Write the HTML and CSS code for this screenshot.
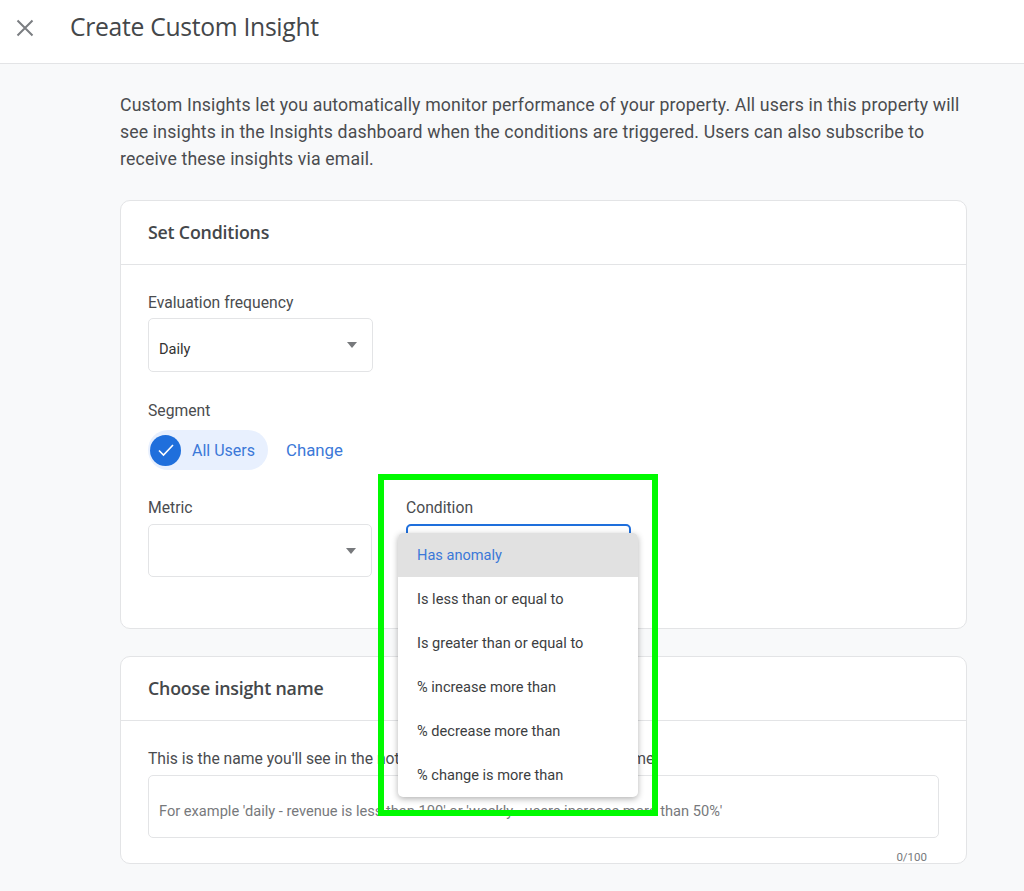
FILE: index.html
```html
<!DOCTYPE html>
<html lang="en">

<head>
    <meta charset="UTF-8">
    <meta name="viewport" content="width=device-width, initial-scale=1.0">
    <title>Create Custom Insight</title>
    <link rel="stylesheet" href="styles.css">
</head>

<body>

    <header class="top-bar">
        <svg class="close-icon" width="18" height="18" viewBox="0 0 18 18">
            <path d="M1.5 1.5L16.5 16.5M16.5 1.5L1.5 16.5" />
        </svg>
        <h1 class="page-title">Create Custom Insight</h1>
    </header>

    <main class="content">
        <p class="intro">Custom Insights let you automatically monitor performance of your property. All users in this property will see insights in the Insights dashboard when the conditions are triggered. Users can also subscribe to receive these insights via email.</p>

        <section class="card card-conditions">
            <h2 class="card-title">Set Conditions</h2>
            <div class="card-body">
                <label class="field-label">Evaluation frequency</label>
                <div class="select">
                    <span class="select-value">Daily</span>
                    <span class="caret"></span>
                </div>

                <label class="field-label segment-label">Segment</label>
                <div class="segment-row">
                    <div class="chip">
                        <span class="chip-check">
                            <svg width="18" height="18" viewBox="0 0 18 18">
                                <path d="M2 9.5L6.5 14L16 4" />
                            </svg>
                        </span>
                        <span>All Users</span>
                    </div>
                    <a class="change-link" href="#">Change</a>
                </div>

                <div class="metric-row">
                    <div class="metric-col">
                        <label class="field-label">Metric</label>
                        <div class="select select-metric">
                            <span class="caret"></span>
                        </div>
                    </div>
                    <div class="condition-col">
                        <label class="field-label">Condition</label>
                        <div class="select select-open"></div>

                        <ul class="dropdown">
                            <li class="current">Has anomaly</li>
                            <li>Is less than or equal to</li>
                            <li>Is greater than or equal to</li>
                            <li>% increase more than</li>
                            <li>% decrease more than</li>
                            <li>% change is more than</li>
                        </ul>
                    </div>
                </div>
            </div>
        </section>

        <section class="card card-name">
            <h2 class="card-title">Choose insight name</h2>
            <div class="card-body name-body">
                <label class="field-label name-label">This is the name you'll see in the notification and on the dashboard name</label>
                <div class="text-input">For example 'daily - revenue is less than 100' or 'weekly - users increase more than 50%'</div>
                <div class="counter">0/100</div>
            </div>
        </section>
    </main>

    <!-- annotation box drawn over the screenshot -->
    <div class="highlight"></div>

</body>

</html>
```

FILE: styles.css
```css
* {
    margin: 0;
    padding: 0;
    box-sizing: border-box;
}

html,
body {
    height: 891px;
    overflow: hidden;
}

body {
    position: relative;
    background: #f8f9fa;
    color: #444649;
    font-family: Roboto, "Liberation Sans", sans-serif;
}

ul {
    list-style: none;
}

.top-bar {
    display: flex;
    align-items: center;
    height: 64px;
    padding-left: 16px;
    padding-bottom: 7px;
    background: #fff;
    border-bottom: 1px solid #e3e4e6;
}

.close-icon {
    flex: none;
}

.close-icon path {
    fill: none;
    stroke: #7b7e82;
    stroke-width: 2;
}

.page-title {
    margin-left: 36px;
    padding-bottom: 3px;
    font-family: "Open Sans", sans-serif;
    font-size: 24.7px;
    font-weight: 400;
    letter-spacing: -0.3px;
    color: #44474a;
}

.content {
    width: 847px;
    margin-left: 120px;
    padding-top: 28px;
}

.intro {
    font-size: 17.7px;
    line-height: 27px;
    letter-spacing: 0.14px;
    color: #4a4c4f;
}

.card {
    background: #fff;
    border: 1px solid #e3e4e6;
    border-radius: 10px;
}

.card-conditions {
    height: 429px;
    margin-top: 27px;
}

.card-name {
    height: 208px;
    margin-top: 27px;
}

.card-title {
    height: 64px;
    padding-left: 27px;
    line-height: 62px;
    font-family: "Open Sans", sans-serif;
    font-size: 17.8px;
    font-weight: 600;
    letter-spacing: -0.2px;
    color: #44474a;
    border-bottom: 1px solid #e3e4e6;
}

.card-body {
    padding: 28px 27px 0;
}

.field-label {
    display: block;
    font-size: 15.7px;
    line-height: 20px;
    color: #4a4c4f;
}

.select {
    position: relative;
    width: 225px;
    height: 54px;
    margin-top: 5px;
    background: #fff;
    border: 1px solid #e3e4e6;
    border-radius: 5px;
}

.select-value {
    display: block;
    padding: 21px 0 0 10px;
    font-size: 14.6px;
    line-height: 18px;
    color: #333;
}

.caret {
    position: absolute;
    top: 23px;
    right: 15px;
    border-left: 5.5px solid transparent;
    border-right: 5.5px solid transparent;
    border-top: 6px solid #77797c;
}

.segment-label {
    margin-top: 29px;
}

.segment-row {
    display: flex;
    align-items: center;
    margin-top: 9px;
}

.chip {
    display: flex;
    align-items: center;
    gap: 11px;
    width: 120px;
    height: 40px;
    padding-left: 2px;
    font-size: 16px;
    color: #3b78d8;
    background: #e8f0fe;
    border-radius: 20px;
}

.chip-check {
    display: flex;
    align-items: center;
    justify-content: center;
    width: 31px;
    height: 31px;
    background: #1f6fdc;
    border-radius: 50%;
}

.chip-check path {
    fill: none;
    stroke: #fff;
    stroke-width: 1.6;
}

.change-link {
    margin-left: 18px;
    font-size: 16.8px;
    color: #3b78d8;
    text-decoration: none;
}

.metric-row {
    display: flex;
    gap: 34px;
    margin-top: 28px;
}

.metric-row .select {
    margin-top: 6px;
}

.select-metric {
    width: 224px;
    height: 53px;
}

.condition-col {
    position: relative;
}

.select-open {
    border: 2px solid #1f6fdc;
}

.dropdown {
    position: absolute;
    z-index: 1;
    top: 35px;
    left: -8px;
    width: 240px;
    height: 264px;
    overflow: hidden;
    font-size: 14.6px;
    color: #3c3e41;
    background: #fff;
    border-radius: 5px;
    box-shadow: 0 2px 6px rgba(0, 0, 0, 0.3);
}

.dropdown li {
    height: 44px;
    padding-left: 19px;
    line-height: 44px;
}

.dropdown .current {
    color: #3b78d8;
    background: #e1e1e1;
}

.name-body {
    position: relative;
    padding-top: 28px;
}

.name-label {
    white-space: nowrap;
}

.text-input {
    width: 791px;
    height: 63px;
    margin-top: 6px;
    padding: 26px 0 0 10px;
    font-size: 14.63px;
    line-height: 18px;
    color: #77797c;
    border: 1px solid #e3e4e6;
    border-radius: 5px;
}

.counter {
    position: absolute;
    top: 129px;
    right: 39px;
    font-size: 11.5px;
    line-height: 14px;
    color: #77797c;
}

.highlight {
    position: absolute;
    z-index: 2;
    top: 474px;
    left: 378px;
    width: 280px;
    height: 342px;
    border: 6px solid #00fa00;
}
```
